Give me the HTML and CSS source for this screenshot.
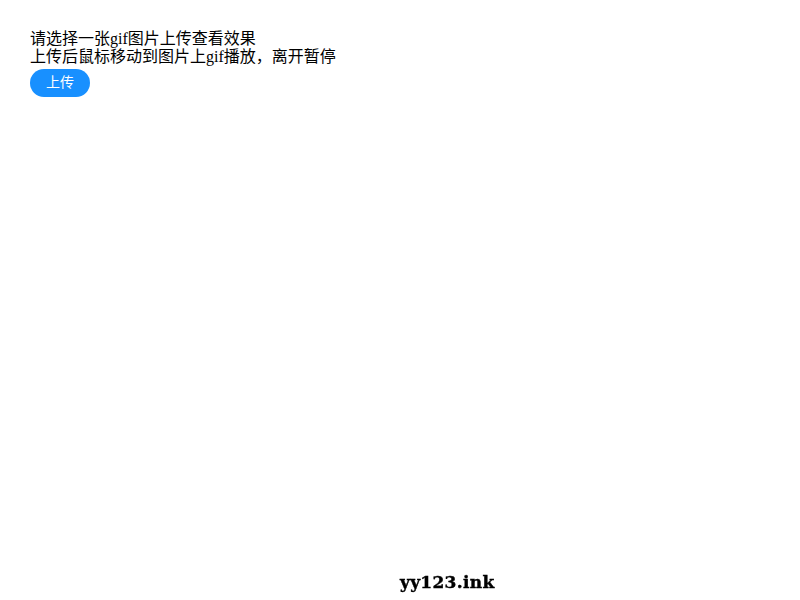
FILE: index.html
```html
<!DOCTYPE html>
<html lang="zh">
<head>
<meta charset="utf-8">
<title>gif</title>
<link rel="stylesheet" href="styles.css">
</head>
<body>
<div class="wrap">
  <div class="line">请选择一张gif图片上传查看效果</div>
  <div class="line">上传后鼠标移动到图片上gif播放，离开暂停</div>
  <button class="upload">上传</button>
</div>
<div class="footer">yy123.ink</div>
</body>
</html>
```
FILE: styles.css
```css
html, body {
  margin: 0;
  padding: 0;
  background: #fff;
}
.wrap {
  padding: 30px 30px 0 30px;
  font-family: "Liberation Serif", "Noto Sans CJK SC", serif;
  font-size: 16px;
  color: #000;
}
.line {
  line-height: 18px;
  height: 18px;
}
.upload {
  display: block;
  margin-top: 3px;
  width: 60px;
  height: 28px;
  border: none;
  border-radius: 14px;
  background: #1890ff;
  color: #fff;
  font-family: "Noto Sans CJK SC", sans-serif;
  font-size: 14px;
  padding: 0 0 3px 0;
  line-height: 25px;
}
.footer {
  position: fixed;
  left: 400px;
  bottom: 8px;
  font-family: "DejaVu Serif", serif;
  font-weight: bold;
  font-size: 17px;
  letter-spacing: 0.3px;
  line-height: 20px;
  color: #000;
  -webkit-text-stroke: 0.4px #000;
}
```
